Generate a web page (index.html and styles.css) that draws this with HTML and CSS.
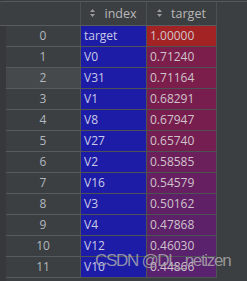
FILE: index.html
```html
<!DOCTYPE html>
<html>
<head>
<meta charset="utf-8">
<link rel="stylesheet" href="styles.css">
</head>
<body>
<div class="view">
  <div class="topline"></div>
  <div class="row head">
    <div class="corner"></div>
    <div class="hcell"><svg class="sort" width="5" height="8" viewBox="0 0 5 8"><path d="M0 3L2.5 0L5 3Z M0 5L5 5L2.5 8Z" fill="#9a9a9a"/></svg><span>index</span></div>
    <div class="hcell"><svg class="sort" width="5" height="8" viewBox="0 0 5 8"><path d="M0 3L2.5 0L5 3Z M0 5L5 5L2.5 8Z" fill="#9a9a9a"/></svg><span>target</span></div>
  </div>
  <div class="body">
    <div class="row"><div class="gut"></div><div class="num">0</div><div class="idx">target</div><div class="val" style="background: rgb(163,34,35)">1.00000</div></div>
    <div class="row"><div class="gut"></div><div class="num">1</div><div class="idx">V0</div><div class="val" style="background: rgb(124,30,75)">0.71240</div></div>
    <div class="row sel"><div class="gut"></div><div class="num">2</div><div class="idx">V31</div><div class="val" style="background: rgb(124,30,75)">0.71164</div></div>
    <div class="row"><div class="gut"></div><div class="num">3</div><div class="idx">V1</div><div class="val" style="background: rgb(120,30,79)">0.68291</div></div>
    <div class="row"><div class="gut"></div><div class="num">4</div><div class="idx">V8</div><div class="val" style="background: rgb(120,30,79)">0.67947</div></div>
    <div class="row"><div class="gut"></div><div class="num">5</div><div class="idx">V27</div><div class="val" style="background: rgb(117,30,82)">0.65740</div></div>
    <div class="row"><div class="gut"></div><div class="num">6</div><div class="idx">V2</div><div class="val" style="background: rgb(107,31,91)">0.58585</div></div>
    <div class="row"><div class="gut"></div><div class="num">7</div><div class="idx">V16</div><div class="val" style="background: rgb(102,31,97)">0.54579</div></div>
    <div class="row"><div class="gut"></div><div class="num">8</div><div class="idx">V3</div><div class="val" style="background: rgb(96,32,102)">0.50162</div></div>
    <div class="row"><div class="gut"></div><div class="num">9</div><div class="idx">V4</div><div class="val" style="background: rgb(93,33,106)">0.47868</div></div>
    <div class="row"><div class="gut"></div><div class="num">10</div><div class="idx">V12</div><div class="val" style="background: rgb(90,33,109)">0.46030</div></div>
    <div class="row"><div class="gut"></div><div class="num">11</div><div class="idx">V10</div><div class="val" style="background: rgb(89,34,111)">0.44866</div></div>
  </div>
  <div class="watermark">CSDN @DL_netizen</div>
</div>
</body>
</html>
```
FILE: styles.css
```css
html, body {
  margin: 0;
  padding: 0;
  background: #3c3f41;
}
.view {
  position: relative;
  width: 247px;
  height: 281px;
  overflow: hidden;
  font-family: "Open Sans", "Noto Sans", sans-serif;
  font-size: 12px;
  color: #bbbbbb;
  background: linear-gradient(to right, #36383a 0 6px, #3c3f41 6px);
}
.topline {
  height: 1px;
  margin-top: 1px;
  background: #56595b;
  width: 247px;
}
.row {
  display: grid;
  grid-template-columns: 6px 75px 66px 70px;
  height: 21px;
}
.head {
  grid-template-columns: 81px 66px 70px;
  height: 23px;
  width: 217px;
  border-bottom: 1px solid #5a5d5f;
  background: #3c3f41;
}
.corner {
  border-right: 1px solid #4d5052;
}
.hcell {
  display: flex;
  align-items: center;
  justify-content: center;
  gap: 9px;
  border-right: 1px solid #4d5052;
  color: #b8b8b8;
  font-size: 12.5px;
}
.hcell span {
  padding-bottom: 1px;
}
.sort {
  display: block;
  margin-top: -1px;
}
.gut {
  background: #36383a;
}
.num {
  border-right: 1px solid #505355;
  border-bottom: 1px solid #585b5d;
  text-align: center;
  line-height: 20px;
  color: #b0b8c0;
}
.sel .num {
  background: #45494b;
}
.idx, .val {
  border-right: 1px solid #4f5254;
  border-bottom: 1px solid #4f5254;
  line-height: 20px;
  padding-left: 3px;
}
.idx {
  background: #1c1ca6;
  color: #c9c9e6;
}
.val {
  color: #d0c4cc;
}
.watermark {
  position: absolute;
  left: 95px;
  top: 251px;
  font-family: "Liberation Sans", Arial, sans-serif;
  font-size: 17px;
  letter-spacing: -1.3px;
  color: rgba(175, 175, 175, 0.8);
  white-space: nowrap;
}
```
